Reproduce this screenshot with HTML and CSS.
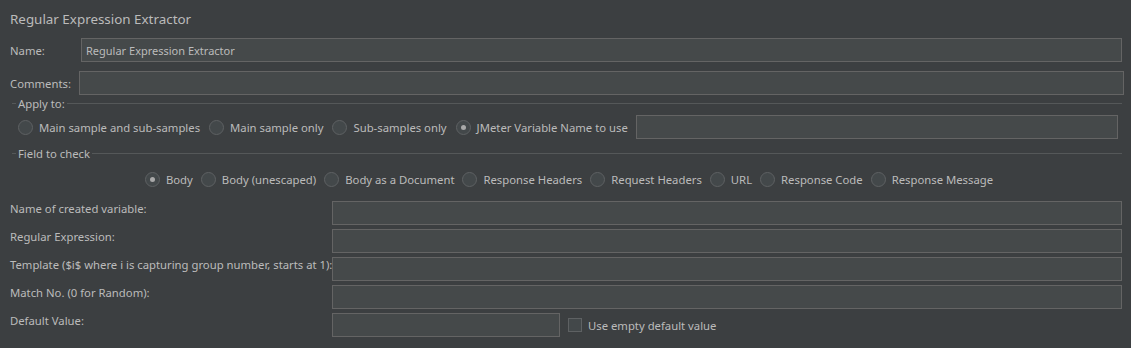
FILE: index.html
```html
<!DOCTYPE html>
<html>
<head>
  <title>Regular Expression Extractor</title>
  <link rel="stylesheet" href="styles.css">
</head>
<body>

  <div class="panel">
    <h1 class="title">Regular Expression Extractor</h1>

    <!-- Name / Comments -->
    <div class="row name-row">
      <label class="lbl">Name:</label>
      <input type="text" class="field" value="Regular Expression Extractor">
    </div>
    <div class="row comments-row">
      <label class="lbl">Comments:</label>
      <input type="text" class="field">
    </div>

    <!-- Apply to -->
    <div class="group-title">Apply to:</div>
    <div class="radio-row apply-row">
      <label class="radio"><span class="dot"></span>Main sample and sub-samples</label>
      <label class="radio"><span class="dot"></span>Main sample only</label>
      <label class="radio"><span class="dot"></span>Sub-samples only</label>
      <label class="radio"><span class="dot on"></span>JMeter Variable Name to use</label>
      <input type="text" class="field var-field">
    </div>

    <!-- Field to check -->
    <div class="group-title">Field to check</div>
    <div class="radio-row check-row">
      <label class="radio"><span class="dot on"></span>Body</label>
      <label class="radio"><span class="dot"></span>Body (unescaped)</label>
      <label class="radio"><span class="dot"></span>Body as a Document</label>
      <label class="radio"><span class="dot"></span>Response Headers</label>
      <label class="radio"><span class="dot"></span>Request Headers</label>
      <label class="radio"><span class="dot"></span>URL</label>
      <label class="radio"><span class="dot"></span>Response Code</label>
      <label class="radio"><span class="dot"></span>Response Message</label>
    </div>

    <!-- Extractor settings -->
    <div class="settings">
      <label class="lbl">Name of created variable:</label>
      <input type="text" class="field">
      <label class="lbl">Regular Expression:</label>
      <input type="text" class="field">
      <label class="lbl">Template ($i$ where i is capturing group number, starts at 1):</label>
      <input type="text" class="field">
      <label class="lbl">Match No. (0 for Random):</label>
      <input type="text" class="field">
      <label class="lbl">Default Value:</label>
      <div class="default-row">
        <input type="text" class="field default-field">
        <label class="check"><span class="box"></span>Use empty default value</label>
      </div>
    </div>
  </div>

</body>
</html>
```

FILE: styles.css
```css
body {
  margin: 0;
  background: #3c3f41;
  color: #bbbbbb;
  font-family: 'Noto Sans', sans-serif;
  font-size: 11.3px;
}

.panel {
  padding: 0 9px 0 10px;
}

.title {
  margin: 0;
  height: 38px;
  line-height: 39px;
  font-size: 13.4px;
  font-weight: normal;
  color: #bbbbbb;
}

.lbl {
  white-space: nowrap;
}

.field {
  box-sizing: border-box;
  height: 24px;
  padding: 0 4px;
  background: #45494a;
  border: 1px solid #646464;
  color: #bbbbbb;
  font-family: inherit;
  font-size: 11px;
  outline: none;
}

.row {
  display: flex;
  align-items: center;
}

.row .field {
  flex: 1;
}

.name-row .lbl {
  width: 71px;
}

.comments-row {
  margin-top: 9px;
}

.comments-row .lbl {
  width: 69px;
}

.comments-row .field {
  margin-right: -2px;
}

/* Titled separators */
.group-title {
  display: flex;
  align-items: center;
  gap: 2px;
  height: 16px;
  margin-left: 2px;
}

.group-title::before {
  content: "";
  width: 4px;
  height: 1px;
  background: #555859;
}

.group-title::after {
  content: "";
  flex: 1;
  height: 1px;
  background: #555859;
}

/* Radio buttons */
.radio-row {
  display: flex;
  align-items: center;
}

.apply-row {
  height: 24px;
  margin: 4px 4px 6px 8px;
}

.check-row {
  justify-content: center;
  gap: 8px;
  height: 24px;
  margin: 6px 0 10px 6px;
}

.radio {
  display: flex;
  align-items: center;
}

.apply-row .radio {
  margin-right: 9px;
}

.dot {
  box-sizing: border-box;
  width: 15px;
  height: 15px;
  margin-right: 6px;
  border: 1px solid #5e6163;
  border-radius: 50%;
  background: #43484a;
  display: flex;
  align-items: center;
  justify-content: center;
}

.dot.on::after {
  content: "";
  width: 5px;
  height: 5px;
  border-radius: 50%;
  background: #a9a9a9;
}

.var-field {
  flex: 1;
  margin-left: -1px;
}

/* Settings grid */
.settings {
  display: grid;
  grid-template-columns: 322px 1fr;
  row-gap: 4px;
}

.settings .lbl {
  line-height: 16px;
}

.default-row {
  display: flex;
  align-items: center;
}

.default-field {
  width: 228px;
}

.check {
  display: flex;
  align-items: center;
  margin-left: 8px;
}

.box {
  box-sizing: border-box;
  width: 14px;
  height: 14px;
  margin-right: 6px;
  border: 1px solid #5e6163;
  background: #43484a;
}
```
